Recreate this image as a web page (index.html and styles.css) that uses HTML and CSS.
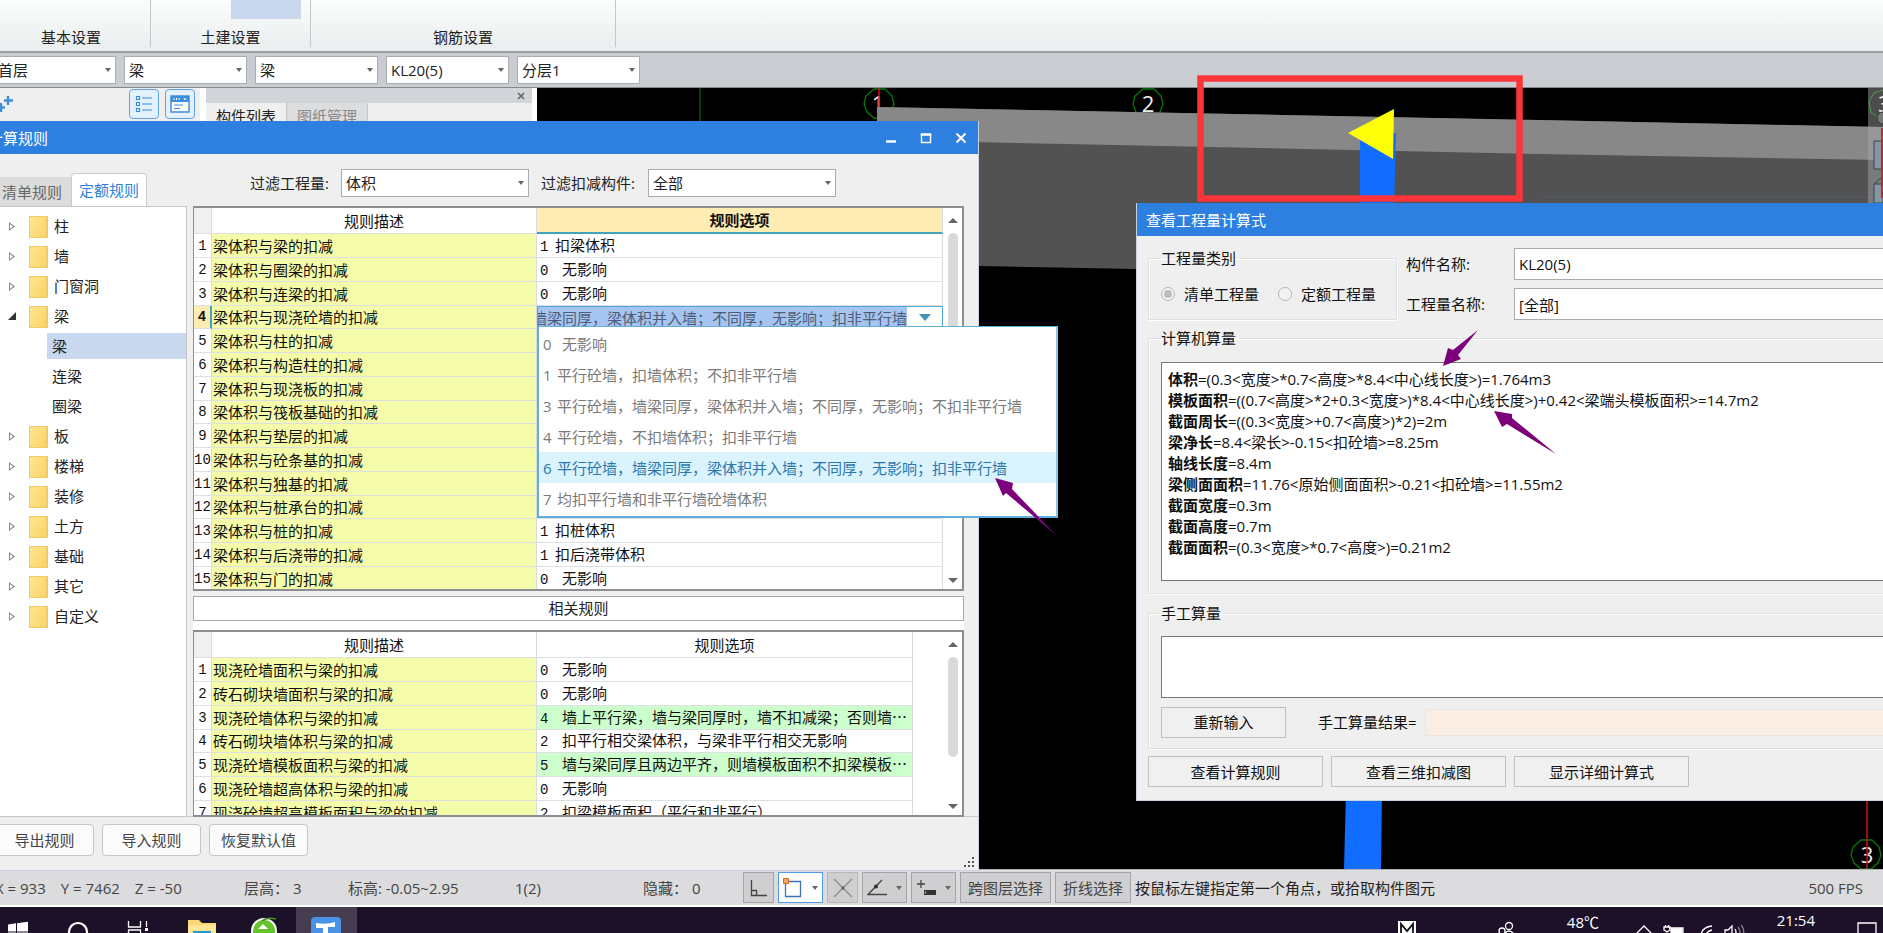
FILE: index.html
```html
<!DOCTYPE html>
<html lang="zh-CN">
<head>
<meta charset="utf-8">
<title>计算规则</title>
<link rel="stylesheet" href="styles.css">
</head>
<body>
<div class="app">
  <header class="ribbon">
    <div class="group group-basic">基本设置</div>
    <div class="group group-civil"><span class="ribbon-active"></span>土建设置</div>
    <div class="group group-rebar">钢筋设置</div>
  </header>

  <nav class="selectors" aria-label="构件选择">
    <span class="combo"><select aria-label="楼层"><option>首层</option></select></span>
    <span class="combo"><select aria-label="类别"><option>梁</option></select></span>
    <span class="combo"><select aria-label="类型"><option>梁</option></select></span>
    <span class="combo"><select aria-label="构件"><option>KL20(5)</option></select></span>
    <span class="combo"><select aria-label="分层"><option>分层1</option></select></span>
  </nav>

  <main class="workspace">
    <aside class="nav-panel">
      <svg class="plus" width="14" height="20" viewBox="0 0 14 20"><path d="M8 2v9M4 6.500h9M1 9v9M-3 13.500h8" stroke="#3f8fd8" stroke-width="2.400"/></svg>
      <button class="view-btn" aria-label="列表">
        <svg width="18" height="18" viewBox="0 0 18 18" fill="none" stroke="#3b8ddd" stroke-width="1.200"><path d="M1.500 1.500h3v3h-3zM1.500 7.500h3v3h-3zM1.500 13.500h3v3h-3zM7 3h10M7 9h10M7 15h10"/></svg>
      </button>
      <button class="view-btn" aria-label="详情">
        <svg width="20" height="18" viewBox="0 0 20 18"><path d="M1 1h18v16H1z" fill="#fff" stroke="#3b8ddd" stroke-width="1.400"/><path d="M1 1h18v6H1z" fill="#3b8ddd"/><path d="M4 3v2M6.500 3v2M9 3v2M14 3l1 2 1-2" stroke="#fff"/><path d="M4 10h9M4 13.500h6" stroke="#3b8ddd" stroke-width="1.200"/></svg>
      </button>
    </aside>
    <aside class="list-panel">
      <div class="panel-strip"><button class="panel-close" aria-label="关闭"><svg width="8" height="8" viewBox="0 0 8 8"><path d="M1 1l6 6M7 1L1 7" stroke="#666" stroke-width="1.600"/></svg></button></div>
      <div class="panel-tabs"><button class="ptab on">构件列表</button><button class="ptab">图纸管理</button></div>
    </aside>
    <svg class="viewport" viewBox="537 88 1346 781" preserveAspectRatio="xMinYMin slice">
      <path d="M700 88v40" stroke="#0a7a0a"/>
      <g fill="none" stroke="#067a06" stroke-width="1.300">
        <path d="M874 89h11l7 7 2 8-3 8-7 6h-10l-7-6-3-8 2-8z"/>
        <path d="M1143 89h11l7 7 2 8-3 8-7 6h-10l-7-6-3-8 2-8z"/>
        <path d="M1861 840h11l7 7 2 8-3 8-7 6h-10l-7-6-3-8 2-8z"/>
      </g>
      <g class="axis-label" text-anchor="middle"><text x="878" y="112">1</text><text x="1148" y="112">2</text><text x="1867" y="863">3</text></g>
      <path d="M879 88v20M1867 800v69" stroke="#d01010" stroke-width="1.500"/>
      <path d="M877 107L1883 127V280L1136 269 877 264z" fill="#525252"/>
      <path d="M877 107L1540 120 1883 127V160L1540 154 877 140z" fill="#888"/>
      <path d="M1360 133H1396L1394 210H1360zM1346 790H1382L1381 869H1344z" fill="#116dff"/>
      <path d="M1348 133L1394 109 1393 159z" fill="#ffff08"/>
      <path d="M1540 197h343" stroke="#515c70"/>
      <path d="M1868 88h15v115h-15z" fill="#aaa" fill-opacity=".45"/>
      <path d="M1883 90l-9 3-5 9 2 10 6 5" fill="none" stroke="#48a048"/>
      <text class="axis-label" x="1878" y="112">3</text>
      <circle cx="1883" cy="118" r="6" fill="#777" stroke="#333"/>
      <path d="M1874 141h9v28h-9zM1874 184h9v19h-9zM1874 184l9-8" fill="#8795a0" stroke="#354550"/>
      <path d="M1882 128v70" stroke="#b03038" stroke-width="2"/>
    </svg>
  </main>

  <footer class="status">
    <span class="st coord"><span>X = 933</span><span>Y = 7462</span><span>Z = -50</span></span>
    <span class="st floor">层高：&nbsp;3</span>
    <span class="st level">标高: -0.05~2.95</span>
    <span class="st count">1(2)</span>
    <span class="st hidden-count">隐藏：&nbsp;0</span>
    <div class="tools">
      <button class="tool sq" aria-label="正交"><svg width="18" height="18" viewBox="0 0 18 18" fill="none" stroke="#444" stroke-width="1.300"><path d="M1.500 1v15.500H17M1.500 11.500h5v5"/></svg></button>
      <button class="tool wide on" aria-label="矩形"><svg width="20" height="20" viewBox="0 0 20 20"><path d="M2.500 3.500h15v15h-15z" fill="none" stroke="#3f6fb8" stroke-width="1.300"/><path d="M.5.5h5v5h-5z" fill="#f5a66c" stroke="#d9691c"/></svg><i class="caret"></i></button>
      <button class="tool sq off" aria-label="交点"><svg width="20" height="20" viewBox="0 0 20 20" stroke="#888" stroke-width="1.200"><path d="M1 1l18 18M19 1L1 19"/><path d="M8.500 8.500h3v3h-3z" fill="#666" stroke="none"/></svg></button>
      <button class="tool wide" aria-label="角度"><svg width="20" height="18" viewBox="0 0 20 18" fill="none" stroke="#444" stroke-width="1.300"><path d="M15 1L1 15.500h19"/><circle cx="9" cy="7.500" r="2" fill="#333" stroke="none"/></svg><i class="caret"></i></button>
      <button class="tool wide" aria-label="偏移"><svg width="20" height="18" viewBox="0 0 20 18" fill="none" stroke="#444" stroke-width="1.300"><path d="M5 1v8M1 5h8"/><path d="M8 11h12v5H8z" fill="#333" stroke="none"/><path d="M9.500 12.500v2" stroke="#bbb"/></svg><i class="caret"></i></button>
      <button class="tool label cross">跨图层选择</button>
      <button class="tool label">折线选择</button>
    </div>
    <span class="hint">按鼠标左键指定第一个角点，或拾取构件图元</span>
    <span class="fps">500 FPS</span>
  </footer>

  <footer class="taskbar">
    <svg class="tb-left" width="400" height="26" viewBox="0 907 400 26">
      <path d="M296 907h61v26h-61z" fill="#463d50"/>
      <path d="M8 924.500l8-1.200v8.200H8zM17 923.200l11-1.500v9.800H17zM8 932.500h8v6H8zM17 932.500h11v6H17z" fill="#fff"/>
      <circle cx="78" cy="932" r="9" fill="none" stroke="#fff" stroke-width="2.200"/>
      <path d="M128.500 921v6h12v-6M128.500 940v-10h12v10M146.500 921v6" fill="none" stroke="#fff" stroke-width="1.300"/><path d="M145 928h3v3h-3z" fill="#fff"/>
      <path d="M188 920h11l3 3h14v12h-28z" fill="#fbd775"/><path d="M188 925h28v10h-28z" fill="#ffe594"/><path d="M193 931h18v4h-18z" fill="#1d9ad0"/>
      <circle cx="264" cy="931" r="13" fill="#fff"/><circle cx="264" cy="931" r="11" fill="#67c32c"/><path d="M258 929l5-5 5 5z" fill="#fff"/><path d="M262 921q5-4 14-2" fill="none" stroke="#4c8d18" stroke-width="1.500"/>
      <rect x="311" y="917" width="30" height="30" rx="4" fill="#4a92e5"/><path d="M316 923q10 2 19-1v5h-7v8h-5v-7h-7z" fill="#fff"/>
    </svg>
    <svg class="tb-right" width="503" height="26" viewBox="1380 907 503 26" fill="none" stroke="#fff" stroke-width="1.300">
      <path d="M1398 921h18v14h-18z" fill="#fff" stroke="none"/><path d="M1401 934v-10l6 7 6-7v10" stroke="#111" stroke-width="1.800"/>
      <circle cx="1509" cy="926" r="3.500"/><circle cx="1502" cy="931" r="3"/><path d="M1496 936q2-4 6-2M1504 934q5-6 10 0"/>
      <path d="M1636 934l8-8 8 8"/>
      <path d="M1669 928h14v10h-14M1664 930v-3h6v3l-3 2zM1665.500 927v-2M1668.500 927v-2"/><path d="M1671 929h11v6h-11z" fill="#fff"/>
      <path d="M1701 935q1-8 11-9M1706 935q1-4 6-5"/>
      <path d="M1725 930h3l4-4v12l-4-4h-3zM1735 929q2 3 0 6"/><path d="M1738 927q4 5 0 9M1741 925q5 6 1 11" stroke="#887c92"/>
      <path d="M1858 923h18v14h-18z"/>
    </svg>
    <span class="temp">48℃</span>
    <time class="clock">21:54</time>
  </footer>
</div>

<section class="window rules" aria-label="计算规则">
  <header class="titlebar">
    <h1>计算规则</h1>
    <div class="win-buttons">
      <button aria-label="最小化"><svg width="12" height="12" viewBox="0 0 12 12"><path d="M1 9.500h10" stroke="#fff" stroke-width="2.400"/></svg></button>
      <button aria-label="最大化"><svg width="12" height="12" viewBox="0 0 12 12"><path d="M1.500 2v8.500h9V2M.500 2.500h11" fill="none" stroke="#fff" stroke-width="1.400"/><path d="M1 2.500h10" stroke="#fff" stroke-width="2.400"/></svg></button>
      <button aria-label="关闭"><svg width="12" height="12" viewBox="0 0 12 12"><path d="M1.500 1.500l9 9M10.500 1.500l-9 9" stroke="#fff" stroke-width="2"/></svg></button>
    </div>
  </header>
  <div class="filters">
    <div class="tabs"><button class="tab">清单规则</button><button class="tab on">定额规则</button></div>
    <label class="filter-a" for="f1">过滤工程量:</label>
    <span class="combo filter-combo"><select id="f1"><option>体积</option></select></span>
    <label class="filter-b" for="f2">过滤扣减构件:</label>
    <span class="combo filter-combo"><select id="f2"><option>全部</option></select></span>
  </div>
  <div class="content">
    <ul class="tree">
      <li class="node">柱</li>
      <li class="node">墙</li>
      <li class="node">门窗洞</li>
      <li class="node open">梁</li>
      <li class="leaf on">梁</li>
      <li class="leaf">连梁</li>
      <li class="leaf">圈梁</li>
      <li class="node">板</li>
      <li class="node">楼梯</li>
      <li class="node">装修</li>
      <li class="node">土方</li>
      <li class="node">基础</li>
      <li class="node">其它</li>
      <li class="node">自定义</li>
    </ul>
    <div class="tables">
      <div class="grid-box main-grid">
        <table class="grid">
          <colgroup><col class="c-num"><col class="c-desc"><col></colgroup>
          <thead><tr><th class="corner"></th><th>规则描述</th><th class="hot">规则选项</th></tr></thead>
          <tbody>
            <tr><th>1</th><td>梁体积与梁的扣减</td><td><b class="k1">1</b>扣梁体积</td></tr>
            <tr><th>2</th><td>梁体积与圈梁的扣减</td><td><b class="k2">0</b>无影响</td></tr>
            <tr><th>3</th><td>梁体积与连梁的扣减</td><td><b class="k2">0</b>无影响</td></tr>
            <tr class="current"><th>4</th><td>梁体积与现浇砼墙的扣减</td><td class="editing"><div class="editor"><input aria-label="规则选项" value="墙梁同厚，梁体积并入墙；不同厚，无影响；扣非平行墙"><button aria-label="展开"></button></div></td></tr>
            <tr><th>5</th><td>梁体积与柱的扣减</td><td></td></tr>
            <tr><th>6</th><td>梁体积与构造柱的扣减</td><td></td></tr>
            <tr><th>7</th><td>梁体积与现浇板的扣减</td><td></td></tr>
            <tr><th>8</th><td>梁体积与筏板基础的扣减</td><td></td></tr>
            <tr><th>9</th><td>梁体积与垫层的扣减</td><td></td></tr>
            <tr><th>10</th><td>梁体积与砼条基的扣减</td><td></td></tr>
            <tr><th>11</th><td>梁体积与独基的扣减</td><td></td></tr>
            <tr><th>12</th><td>梁体积与桩承台的扣减</td><td></td></tr>
            <tr><th>13</th><td>梁体积与桩的扣减</td><td><b class="k1">1</b>扣桩体积</td></tr>
            <tr><th>14</th><td>梁体积与后浇带的扣减</td><td><b class="k1">1</b>扣后浇带体积</td></tr>
            <tr><th>15</th><td>梁体积与门的扣减</td><td><b class="k2">0</b>无影响</td></tr>
          </tbody>
        </table>
        <div class="scroll"><i class="up"></i><i class="thumb"></i><i class="down"></i></div>
      </div>
      <h2 class="related">相关规则</h2>
      <div class="grid-box sub-grid">
        <table class="grid">
          <colgroup><col class="c-num"><col class="c-desc"><col></colgroup>
          <thead><tr><th class="corner"></th><th>规则描述</th><th>规则选项</th></tr></thead>
          <tbody>
            <tr><th>1</th><td>现浇砼墙面积与梁的扣减</td><td><b class="k2">0</b>无影响</td></tr>
            <tr><th>2</th><td>砖石砌块墙面积与梁的扣减</td><td><b class="k2">0</b>无影响</td></tr>
            <tr><th>3</th><td>现浇砼墙体积与梁的扣减</td><td class="green"><b class="k2">4</b>墙上平行梁，墙与梁同厚时，墙不扣减梁；否则墙…</td></tr>
            <tr><th>4</th><td>砖石砌块墙体积与梁的扣减</td><td><b class="k2">2</b>扣平行相交梁体积，与梁非平行相交无影响</td></tr>
            <tr><th>5</th><td>现浇砼墙模板面积与梁的扣减</td><td class="green"><b class="k2">5</b>墙与梁同厚且两边平齐，则墙模板面积不扣梁模板…</td></tr>
            <tr><th>6</th><td>现浇砼墙超高体积与梁的扣减</td><td><b class="k2">0</b>无影响</td></tr>
            <tr><th>7</th><td>现浇砼墙超高模板面积与梁的扣减</td><td><b class="k2">2</b>扣梁模板面积（平行和非平行）</td></tr>
          </tbody>
        </table>
        <div class="scroll"><i class="up"></i><i class="thumb"></i><i class="down"></i></div>
      </div>
    </div>
  </div>
  <footer class="actions">
    <button>导出规则</button><button>导入规则</button><button>恢复默认值</button>
    <svg class="grip" width="11" height="11" viewBox="0 0 11 11"><path d="M9 1h2v2H9zM5 5h2v2H5zM9 5h2v2H9zM1 9h2v2H1zM5 9h2v2H5zM9 9h2v2H9z" fill="#555"/></svg>
  </footer>
</section>

<ul class="options" role="listbox" aria-label="规则选项">
  <li role="option"><b class="k2">0</b>无影响</li>
  <li role="option"><b class="k1">1</b>平行砼墙，扣墙体积；不扣非平行墙</li>
  <li role="option"><b class="k1">3</b>平行砼墙，墙梁同厚，梁体积并入墙；不同厚，无影响；不扣非平行墙</li>
  <li role="option"><b class="k1">4</b>平行砼墙，不扣墙体积；扣非平行墙</li>
  <li role="option" class="on" aria-selected="true"><b class="k1">6</b>平行砼墙，墙梁同厚，梁体积并入墙；不同厚，无影响；扣非平行墙</li>
  <li role="option"><b class="k1">7</b>均扣平行墙和非平行墙砼墙体积</li>
</ul>

<section class="window formula" aria-label="查看工程量计算式">
  <header class="titlebar"><h1>查看工程量计算式</h1></header>
  <div class="formula-body">
    <div class="top-row">
      <fieldset class="kinds">
        <legend>工程量类别</legend>
        <label><input type="radio" name="kind" checked disabled>清单工程量</label>
        <label><input type="radio" name="kind" disabled>定额工程量</label>
      </fieldset>
      <div class="fields">
        <label for="n1">构件名称:</label><input id="n1" value="KL20(5)">
        <label for="n2">工程量名称:</label><input id="n2" value="[全部]">
      </div>
    </div>
    <fieldset class="computed">
      <legend>计算机算量</legend>
      <div class="result">
        <p><strong>体积</strong>=(0.3&lt;宽度&gt;*0.7&lt;高度&gt;*8.4&lt;中心线长度&gt;)=1.764m3</p>
        <p><strong>模板面积</strong>=((0.7&lt;高度&gt;*2+0.3&lt;宽度&gt;)*8.4&lt;中心线长度&gt;)+0.42&lt;梁端头模板面积&gt;=14.7m2</p>
        <p><strong>截面周长</strong>=((0.3&lt;宽度&gt;+0.7&lt;高度&gt;)*2)=2m</p>
        <p><strong>梁净长</strong>=8.4&lt;梁长&gt;-0.15&lt;扣砼墙&gt;=8.25m</p>
        <p><strong>轴线长度</strong>=8.4m</p>
        <p><strong>梁侧面面积</strong>=11.76&lt;原始侧面面积&gt;-0.21&lt;扣砼墙&gt;=11.55m2</p>
        <p><strong>截面宽度</strong>=0.3m</p>
        <p><strong>截面高度</strong>=0.7m</p>
        <p><strong>截面面积</strong>=(0.3&lt;宽度&gt;*0.7&lt;高度&gt;)=0.21m2</p>
      </div>
    </fieldset>
    <fieldset class="manual">
      <legend>手工算量</legend>
      <textarea aria-label="手工算量"></textarea>
      <div class="manual-row">
        <button>重新输入</button>
        <label for="mr">手工算量结果=</label><input id="mr" readonly>
      </div>
    </fieldset>
    <div class="formula-actions"><button>查看计算规则</button><button>查看三维扣减图</button><button>显示详细计算式</button></div>
  </div>
</section>

<svg class="marks" width="1883" height="933" viewBox="0 0 1883 933" aria-hidden="true">
  <path d="M1200.500 78.500h319v120h-319z" fill="none" stroke="#fb3539" stroke-width="6.500"/>
  <g fill="#7c007c">
    <path d="M995 478L1013 483 1012 489 1057 536 1006 493 1003 496z"/>
    <path d="M1443 366L1448 348 1453 350 1478 330 1458 355 1461 359z"/>
    <path d="M1494 411L1512 414 1512 418 1556 454 1507 424 1502 427z"/>
  </g>
</svg>
</body>
</html>
```
FILE: styles.css
```css
* { box-sizing: border-box; }
body {
  margin: 0;
  height: 100vh;
  overflow: hidden;
  position: relative;
  font: 15px/20px "Open Sans", "Noto Sans CJK SC", sans-serif;
  color: #222;
}
button, input, select, textarea { font: inherit; color: inherit; margin: 0; border-radius: 0; }
button { padding: 0; border: 0; background: none; }
ul { list-style: none; margin: 0; padding: 0; }
h1, h2, p { margin: 0; font-size: 15px; font-weight: 400; }
fieldset { margin: 0; min-width: 0; }

.app { height: 100vh; display: flex; flex-direction: column; background: #efefef; }

/* ribbon */
.ribbon {
  height: 53px;
  flex: none;
  display: flex;
  background: linear-gradient(#fcfdfd, #e9eded);
  border-bottom: 2px solid #9b9ea1;
}
.group {
  position: relative;
  display: flex;
  align-items: flex-end;
  justify-content: center;
  margin-bottom: 4px;
  border-right: 1px solid #c4c8ca;
}
.group-basic { width: 151px; padding-right: 8px; }
.group-civil { width: 160px; }
.group-rebar { width: 305px; }
.ribbon-active { position: absolute; left: 80px; top: 0; width: 70px; height: 19px; background: #c9d8ef; }

/* selectors */
.selectors {
  height: 35px;
  flex: none;
  display: flex;
  gap: 8px;
  padding: 3px 0 4px;
  background: #c9ccd0;
  border-bottom: 1px solid #888;
}
.combo { position: relative; display: block; width: 123px; height: 28px; }
.combo select {
  display: block;
  width: 100%;
  height: 100%;
  appearance: none;
  border: 1px solid #a9adb2;
  background: #fff;
  padding: 0 20px 0 4px;
}
.combo::after {
  content: "";
  position: absolute;
  right: 5px;
  top: 12px;
  border: 3px solid transparent;
  border-top: 4px solid #666;
  border-bottom: 0;
}
.selectors .combo:first-child { margin-left: -7px; }

/* workspace */
.workspace { flex: 1; min-height: 0; display: flex; background: #fff; }
.nav-panel { width: 200px; display: flex; gap: 6px; padding: 1px 5px 0 0; background: #efefef; }
.plus { margin: 5px auto 0 0; }
.view-btn {
  width: 30px;
  height: 30px;
  display: grid;
  place-items: center;
  border: 1px solid #5ba3e6;
  border-radius: 4px;
  background: #e4f1fd;
}
.list-panel { width: 326px; margin: 0 5px 0 6px; background: #efefef; }
.panel-strip { height: 15px; background: #d1d4d8; display: flex; justify-content: flex-end; align-items: center; padding-right: 7px; }
.panel-close { display: flex; }
.panel-tabs { display: flex; }
.ptab { width: 81px; height: 26px; border-right: 1px solid #c6c6c6; }
.ptab + .ptab { background: #dcdddf; color: #888; }
.viewport { flex: 1; min-width: 0; height: 100%; background: #000; display: block; }
.axis-label { fill: #eee; font-size: 22px; }

/* status bar */
.status {
  height: 38px;
  flex: none;
  display: flex;
  align-items: center;
  background: #dcdcde;
  border-top: 1px solid #b0b3b8;
  border-bottom: 2px solid #fff;
  color: #444;
  white-space: nowrap;
}
.coord { width: 249px; margin-left: -5px; display: flex; gap: 15px; }
.floor { width: 104px; }
.level { width: 167px; }
.count { width: 128px; }
.hidden-count { width: 100px; }
.tools { display: flex; gap: 4px; }
.tool { height: 31px; display: flex; align-items: center; justify-content: center; border: 1px solid #a2a4a6; background: #cfcfd1; }
.sq { width: 31px; }
.wide { width: 45px; gap: 9px; }
.tool.on { background: #fff; border-color: #4f9ae8; }
.tool.off { border-color: #b8b8ba; }
.caret { border: 3px solid transparent; border-top: 4px solid #666; border-bottom: 0; }
.label { width: 76px; }
.cross { width: 91px; }
.hint { margin-left: 4px; color: #222; }
.fps { margin-left: auto; margin-right: 20px; }

/* taskbar */
.taskbar { height: 26px; flex: none; display: flex; justify-content: space-between; background: #1c1128; color: #fff; position: relative; overflow: hidden; }
.temp { position: absolute; right: 284px; top: 5px; }
.clock { position: absolute; right: 68px; top: 3px; }

/* windows */
.window { position: absolute; background: #efefef; border: 1px solid #c9d3df; }
.titlebar { height: 33px; display: flex; align-items: center; justify-content: space-between; background: #2d7fe0; color: #fff; }
.win-buttons { display: flex; gap: 23px; padding-right: 11px; }
.win-buttons button { display: flex; }
.rules { left: -20px; top: 121px; width: 999px; border-top: 0; }
.rules .titlebar { padding-left: 7px; }

.filters { height: 52px; display: flex; align-items: center; padding-top: 5px; }
.tabs { display: flex; align-items: flex-end; align-self: stretch; width: 269px; padding-left: 12px; }
.tab { width: 78px; height: 29px; background: #dcdcdc; color: #666; }
.tab.on { width: 76px; height: 33px; background: #fff; color: #2f7fe0; border: 1px solid #ccc; border-bottom: 0; border-radius: 4px 4px 0 0; }
.filter-a { width: 91px; }
.filter-b { width: 107px; margin-left: 12px; }
.filter-combo { width: 188px; }

.content { display: grid; grid-template-columns: 206px minmax(0, 1fr); gap: 6px; padding-right: 14px; height: 610px; }
.tree { background: #fff; border: 1px solid #c4c6c8; border-left: 0; padding-top: 4px; }
.node, .leaf { height: 30px; display: flex; align-items: center; position: relative; }
.node { padding-left: 73px; }
.node::before { content: ""; position: absolute; left: 48px; top: 5px; width: 16px; height: 20px; background: linear-gradient(120deg, #ffe68e, #f9d36b); border: 1px solid #efcb62; border-right-width: 2px; }
.node::after { content: ""; position: absolute; left: 28px; top: 11px; width: 6px; height: 9px; background: #888; clip-path: polygon(0 0, 100% 50%, 0 100%, 0 0, 1px 2px, 1px 7px, 4px 50%, 1px 2px); }
.node.open::after { width: 8px; height: 8px; left: 27px; background: #333; clip-path: polygon(100% 0, 100% 100%, 0 100%); }
.leaf { margin-left: 66px; padding-left: 5px; border: solid transparent; border-width: 2px 0; background-clip: padding-box; }
.leaf.on { background-color: #c9d8ef; }

.tables { display: flex; flex-direction: column; background: #fff; min-width: 0; }
.grid-box { display: flex; flex: none; border: 2px solid #8b8f94; border-left-width: 1px; background: #fff; overflow: hidden; }
.main-grid { height: 385px; }
.sub-grid { height: 187px; }
.grid { flex: 1; min-width: 0; table-layout: fixed; border-collapse: separate; border-spacing: 0; font-family: "Noto Sans CJK SC", sans-serif; color: #111; align-self: flex-start; }
.c-num { width: 18px; }
.c-desc { width: 325px; }
.grid th, .grid td { padding: 0; border-right: 1px solid #d9dcdf; border-bottom: 1px solid #dde0e3; font-weight: 400; white-space: nowrap; overflow: hidden; line-height: 20px; }
.grid thead th { height: 26px; }
.grid tbody tr { height: 24px; }
.grid tbody tr:nth-child(4n) { height: 23px; }
.grid .corner { background: #f0f0f0; }
.grid thead .hot { background: #ffecb3; border-bottom: 2px solid #41a4bb; font-weight: 700; }
.grid tbody th { font: 14px/20px "Liberation Mono", monospace; }
.grid td { text-align: left; padding-left: 1px; }
.grid td:nth-child(3) { padding-left: 2px; }
.grid td:nth-child(2) { background: #f5fca9; }
.grid .green { background: #ccffcc; }
.grid .current th { background: #ffecb3; border-right: 2px solid #41a4bb; font-weight: 700; }
.k1, .k2 { display: inline-block; font: 14px/20px "Liberation Mono", monospace; width: 16px; padding-left: 1px; }
.k2 { width: 23px; }
.grid td.editing:nth-child(3) { padding: 0; border: 1px solid #4aa8dd; }
.editor { display: flex; height: 21px; }
.editor input { flex: 1; min-width: 0; height: 21px; border: 0; padding: 0; background: #a6c4f0; color: #4d5d78; text-indent: -6px; }
.editor button { width: 35px; display: grid; place-items: center; }
.editor button::before { content: ""; border: 6px solid transparent; border-top: 7px solid #4391b5; border-bottom: 0; }

.scroll { width: 19px; display: flex; flex-direction: column; align-items: center; padding: 10px 0 6px; }
.sub-grid .scroll { width: 49px; padding-left: 30px; }
.up { border: 5px solid transparent; border-bottom: 5px solid #666; border-top: 0; }
.down { border: 5px solid transparent; border-top: 5px solid #666; border-bottom: 0; margin-top: auto; }
.thumb { width: 10px; height: 190px; margin-top: 10px; border-radius: 5px; background: #d9d9d9; }
.sub-grid .thumb { height: 100px; }
.related { height: 25px; flex: none; margin: 0 0 9px; border: 1px solid #a6a9ad; text-align: center; line-height: 22px; }
.main-grid { box-shadow: 0 5px 0 #efefef; margin-bottom: 5px; }

.actions { display: flex; gap: 8px; padding: 7px 4px 3px 14px; height: 54px; border-top: 1px solid #c8cacc; }
.actions button { width: 99px; height: 32px; border: 1px solid #c3c5cc; border-radius: 4px; background: #fbfbfc; color: #444; }
.grip { margin: auto 0 0 auto; }

/* option popup */
.options { position: absolute; z-index: 2; left: 537px; top: 326px; width: 521px; padding: 1px 0 2px; background: #fff; border: 2px solid #62aedb; border-top-width: 1px; border-right-color: #8cc4e6; color: #7a7a7a; }
.options li { height: 31px; display: flex; align-items: center; padding-left: 4px; }
.options .on { background: #dbf3fc; color: #2a78b0; }
.options b { font: inherit; width: 14px; padding: 0; }
.options .k2 { width: 19px; }

/* formula window */
.formula { left: 1136px; right: -30px; top: 203px; height: 598px; border-top: 0; }
.formula .titlebar { padding-left: 9px; }
.formula-body { padding: 12px 0 0 11px; color: #111; }
.formula fieldset { border: 1px solid #dfe0e1; box-shadow: 1px 1px 0 #fff, inset 1px 1px 0 #fff; padding: 0 0 0 12px; }
.formula legend { padding: 0 4px 0 0; height: 20px; }
.top-row { display: flex; align-items: flex-start; }
.kinds { width: 249px; height: 72px; display: flex; gap: 19px; margin-top: 0; }
.kinds label { display: flex; align-items: center; gap: 9px; height: 32px; margin-top: 10px; }
.kinds input { appearance: none; width: 14px; height: 14px; border: 1px solid #b5b5b5; border-radius: 50%; background: #f3f3f3; display: grid; place-items: center; }
.kinds input:checked::before { content: ""; width: 8px; height: 8px; border-radius: 50%; background: #bbb; }
.fields { flex: 1; display: grid; grid-template-columns: 108px 1fr; grid-auto-rows: 32px; row-gap: 8px; align-items: center; padding-left: 9px; }
.fields input { height: 32px; min-width: 0; border: 1px solid #ababab; background: #fff; padding: 0 4px; }
.computed { margin-top: 8px; height: 266px; }
.result { margin-top: 14px; height: 219px; border: 1px solid #777; background: #fff; padding: 6px; white-space: nowrap; }
.result p { line-height: 21px; }
.result strong { font-weight: 700; }
.manual { margin-top: 9px; height: 146px; }
.manual textarea { display: block; width: 100%; height: 62px; margin-top: 13px; border: 1px solid #777; background: #fff; resize: none; }
.manual-row { display: flex; align-items: center; margin-top: 8px; height: 32px; }
.formula button { height: 31px; border: 1px solid #c0c0c0; background: #f0f0f0; }
.manual-row button { width: 125px; margin-right: 32px; }
.manual-row input { flex: 1; min-width: 0; height: 27px; margin-left: 8px; border: 1px solid #e8e5e2; background: #faeee4; }
.formula-actions { display: flex; gap: 8px; margin-top: 7px; }
.formula-actions button { width: 175px; }

.marks { position: absolute; z-index: 3; left: 0; top: 0; pointer-events: none; }
```
